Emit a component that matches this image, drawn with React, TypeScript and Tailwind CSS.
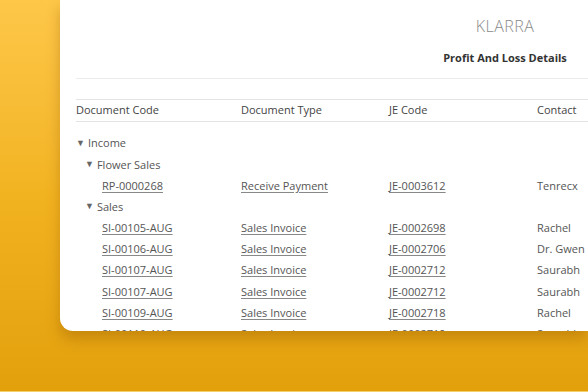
const rows: { code: string; type: string; je: string; contact: string }[] = [
  { code: 'SI-00105-AUG', type: 'Sales Invoice', je: 'JE-0002698', contact: 'Rachel' },
  { code: 'SI-00106-AUG', type: 'Sales Invoice', je: 'JE-0002706', contact: 'Dr. Gwen' },
  { code: 'SI-00107-AUG', type: 'Sales Invoice', je: 'JE-0002712', contact: 'Saurabh' },
  { code: 'SI-00107-AUG', type: 'Sales Invoice', je: 'JE-0002712', contact: 'Saurabh' },
  { code: 'SI-00109-AUG', type: 'Sales Invoice', je: 'JE-0002718', contact: 'Rachel' },
  { code: 'SI-00110-AUG', type: 'Sales Invoice', je: 'JE-0002719', contact: 'Saurabh' },
];

function Caret() {
  return <span className="mr-[3px] text-[9px] text-[#666] relative -top-[1px]">▼</span>;
}

function DataRow({ code, type, je, contact }: { code: string; type: string; je: string; contact: string }) {
  return (
    <div className="flex h-[21.2px] items-center text-[#555]">
      <div className="w-[165px] pl-[26px]">
        <span className="underline underline-offset-2 decoration-[#888]">{code}</span>
      </div>
      <div className="w-[148px]">
        <span className="underline underline-offset-2 decoration-[#888]">{type}</span>
      </div>
      <div className="w-[148px]">
        <span className="underline underline-offset-2 decoration-[#888]">{je}</span>
      </div>
      <div className="flex-1 whitespace-nowrap">{contact}</div>
    </div>
  );
}

export default function App() {
  return (
    <div className="h-[392px] w-[588px] overflow-hidden bg-gradient-to-b from-[#fec748] via-[#f2b320] to-[#e2a00b] font-['Open_Sans',sans-serif]">
      <div className="flex h-[391px] flex-col">
        {/* carte du rapport */}
        <div className="ml-[60px] h-[331px] overflow-hidden rounded-bl-[13px] bg-white shadow-[0_8px_14px_rgba(140,80,0,0.35)]">
          <div className="flex justify-end">
            <div className="w-[166px] pt-[15px] text-center">
              <div className="text-[16px] font-light leading-[22px] tracking-[0.5px] text-[#8a8a8a]">KLARRA</div>
              <div className="mt-[13px] text-[11px] font-bold leading-[16px] text-[#333]">
                Profit And Loss Details
              </div>
            </div>
          </div>

          <div className="ml-[16px] text-[11px]">
            <div className="mt-[12px] border-t border-[#ebebeb]" />
            <div className="mt-[20px] flex h-[23px] items-center border-y border-[#e3e3e3] text-[#444]">
              <div className="w-[165px]">Document Code</div>
              <div className="w-[148px]">Document Type</div>
              <div className="w-[148px]">JE Code</div>
              <div className="flex-1">Contact</div>
            </div>

            <div className="pt-[11px]">
              <div className="flex h-[21.2px] items-center text-[#555]">
                <Caret />
                Income
              </div>
              <div className="flex h-[21.2px] items-center pl-[9px] text-[#555]">
                <Caret />
                Flower Sales
              </div>
              <DataRow code="RP-0000268" type="Receive Payment" je="JE-0003612" contact="Tenrecx" />
              <div className="flex h-[21.2px] items-center pl-[9px] text-[#555]">
                <Caret />
                Sales
              </div>
              {rows.map((r, i) => (
                <DataRow key={i} {...r} />
              ))}
            </div>
          </div>
        </div>
      </div>
      <div className="h-[1px] bg-[#f6cf6a]" />
    </div>
  );
}
